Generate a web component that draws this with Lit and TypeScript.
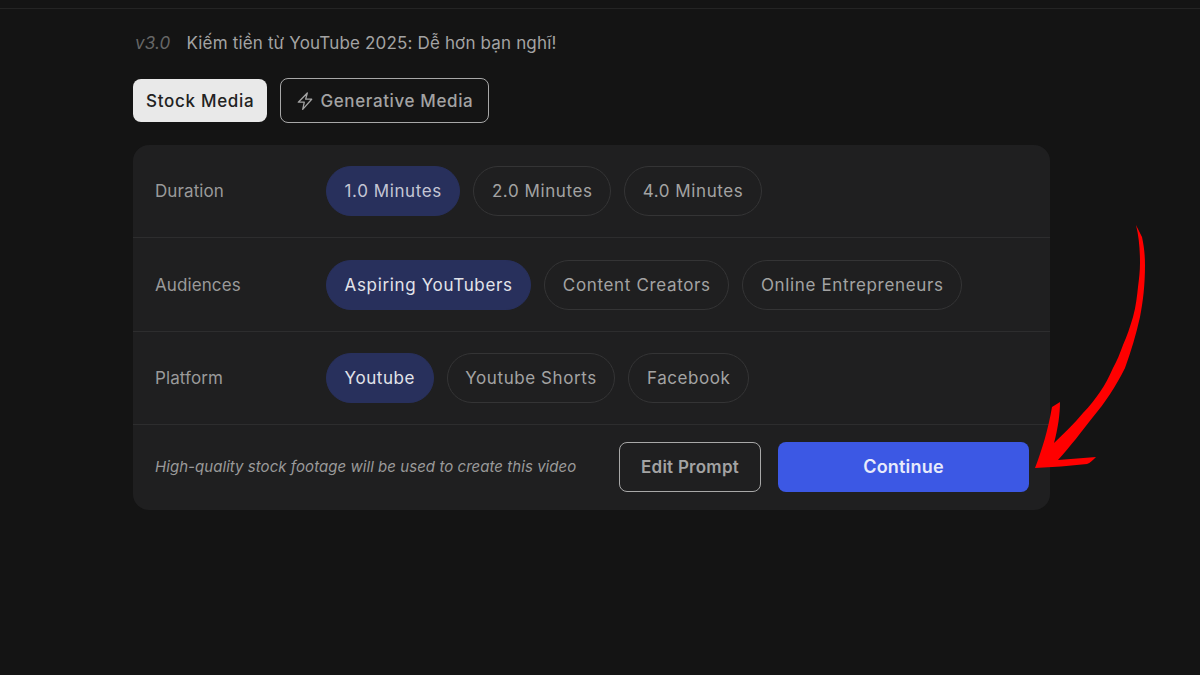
import { LitElement, html, css } from "lit";
import { customElement } from "lit/decorators.js";

@customElement("app-root")
export class AppRoot extends LitElement {
  static styles = css`
    :host { display: block; width: 1200px; height: 675px; background: #141414; font-family: Inter, "Noto Sans", sans-serif; position: relative; overflow: hidden; }
    .top { height: 8px; border-bottom: 1px solid #242424; }
    .wrap { padding: 0 150px 0 133px; display: flex; flex-direction: column; }
    .title { display: flex; align-items: center; gap: 16px; height: 34px; margin-top: 17px; padding-left: 2px; font-size: 17px; letter-spacing: 0.16px; color: #a3a3a3; }
    .ver { font-style: italic; color: #666; }
    .tabs { display: flex; gap: 13px; margin-top: 18px; align-items: center; }
    .tab { height: 43px; box-sizing: border-box; border-radius: 8px; display: flex; align-items: center; font-size: 17px; font-weight: 500; letter-spacing: 0.7px; }
    .tab.on { background: #e9e9e9; color: #222; padding: 0 13px; }
    .tab.off { border: 1px solid #a8a8a8; color: #a3a3a3; padding: 0 15px; gap: 6px; height: 45px; letter-spacing: 0.62px; }
    .tab svg { width: 18px; height: 20px; }
    .card { margin-top: 22px; background: #1f1f20; border-radius: 16px; height: 365px; display: flex; flex-direction: column; }
    .row { height: 93.4px; box-sizing: border-box; display: flex; align-items: center; padding-left: 22px; border-bottom: 1px solid #2d2d2e; }
    .label { width: 171px; font-size: 17px; letter-spacing: 0.1px; color: #9a9a9a; }
    .chips { display: flex; gap: 13px; letter-spacing: 0.58px; }
    .chips.wide { letter-spacing: 0.65px; }
    .chip { height: 50px; box-sizing: border-box; border-radius: 25px; padding: 0 17.6px; display: flex; align-items: center; font-size: 17px; border: 1px solid #343435; color: #a3a3a3; }
    .chip.sel { background: #28305c; border-color: #28305c; color: #c4c6d4; }
    .chip.sel.lit { color: #e2e3ea; }
    .foot { flex: 1; display: flex; align-items: center; padding: 0 21px 2px 22px; }
    .note { flex: 1; font-size: 15px; letter-spacing: 0.05px; font-style: italic; color: #9a9a9a; }
    .btn { height: 50px; box-sizing: border-box; border-radius: 8px; display: flex; align-items: center; justify-content: center; font-size: 17px; font-weight: 600; }
    .edit { width: 142px; border: 1px solid #a8a8a8; color: #a3a3a3; margin-right: 17px; letter-spacing: 0.25px; }
    .go { width: 251px; background: #3c58e4; color: #e8ebfb; font-size: 18px; letter-spacing: 0.2px; }
    .arrow { position: absolute; left: 0; top: 0; width: 1200px; height: 675px; pointer-events: none; }
  `;

  row(label: string, items: string[], lit = true, wide = false) {
    return html`<div class="row">
      <div class="label">${label}</div>
      <div class="chips ${wide ? "wide" : ""}">
        ${items.map((t, i) => html`<div class="chip ${i === 0 ? "sel" : ""} ${i === 0 && lit ? "lit" : ""}">${t}</div>`)}
      </div>
    </div>`;
  }

  render() {
    return html`
      <div class="top"></div>
      <div class="wrap">
        <div class="title"><span class="ver">v3.0</span><span>Kiếm tiền từ YouTube 2025: Dễ hơn bạn nghĩ!</span></div>
        <div class="tabs">
          <div class="tab on">Stock Media</div>
          <div class="tab off">
            <svg viewBox="0 0 18 20" fill="none" stroke="currentColor" stroke-width="1.3" stroke-linejoin="round" stroke-linecap="round"><path d="M11.3 2 2.3 11.2h6L6.7 18.4l9-10.2H9.7L11.3 2z"/></svg>
            Generative Media
          </div>
        </div>
        <div class="card">
          ${this.row("Duration", ["1.0 Minutes", "2.0 Minutes", "4.0 Minutes"], false)}
          ${this.row("Audiences", ["Aspiring YouTubers", "Content Creators", "Online Entrepreneurs"], true, true)}
          ${this.row("Platform", ["Youtube", "Youtube Shorts", "Facebook"])}
          <div class="foot">
            <div class="note">High-quality stock footage will be used to create this video</div>
            <div class="btn edit">Edit Prompt</div>
            <div class="btn go">Continue</div>
          </div>
        </div>
      </div>
      <svg class="arrow" viewBox="0 0 1200 675">
        <path fill="#ff0000" d="M1136 225 L1142 237 C1144 246 1145 255 1145 265 C1145 285 1143 302 1140 317 C1136 335 1131 351 1125 368 C1116 386 1105 403 1093 417 C1082 431 1070 447 1058 460 L1096 457 C1093 460 1090 463 1087 464 C1070 466 1052 467 1035 468 C1042 450 1048 430 1052 407 L1060 402 C1060 414 1058 428 1054 443 C1064 433 1074 424 1083 413 C1090 406 1095 399 1100 392 C1105 385 1109 377 1113 368 C1117 361 1120 353 1123 345 C1127 336 1130 327 1133 317 C1136 306 1137 296 1138 287 C1139 279 1140 271 1140 263 C1140 250 1139 237 1136 225 Z"/>
      </svg>
    `;
  }
}
